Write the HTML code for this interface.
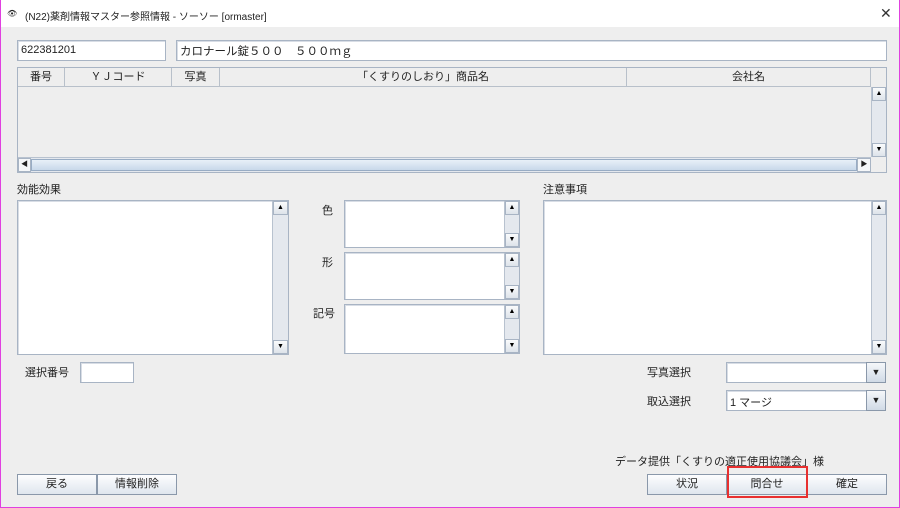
<!DOCTYPE html>
<html><head><meta charset="utf-8"><style>
*{box-sizing:border-box;margin:0;padding:0}
body{width:900px;height:508px;overflow:hidden;background:#eeeeee;font-family:"Liberation Sans","Noto Sans CJK JP",sans-serif;font-size:11px;color:#222;position:relative}
.a{position:absolute}
.win{left:0;top:0;width:900px;height:508px;border:1px solid #e040e0;border-top:none}
.title{left:1px;top:0;width:898px;height:27px;background:#fff}
.in{background:#fff;border:1px solid #a8b4c4;box-shadow:inset 1px 1px 0 #d8dde5}
.sb{background:#e4e8ee;border-left:1px solid #b8c2cf}
.arr{position:absolute;left:0;width:100%;height:14px;background:linear-gradient(#fafbfc,#dde3ea);border:1px solid #a8b4c4;font-size:7px;text-align:center;line-height:12px;color:#000}
.hd{top:68px;height:19px;background:#eee;border-right:1px solid #b8c0ca;border-bottom:1px solid #b8c0ca;text-align:center;line-height:19px}
.btn{height:21px;border:1px solid #8a98aa;background:linear-gradient(#fdfdfe,#dfe6ee);text-align:center;line-height:19px;top:474px}
.lbl{line-height:14px}
</style></head><body>
<div class="a title"></div>
<div class="a" style="left:7px;top:9px;font-size:8px">&#x1F441;</div>
<div class="a" style="left:25px;top:8px;font-size:10px">(N22)薬剤情報マスター参照情報 - ソーソー [ormaster]</div>
<div class="a" style="left:880px;top:5px;font-size:14px;font-weight:300;color:#333">✕</div>

<div class="a in" style="left:17px;top:40px;width:149px;height:21px;padding:3px 3px">622381201</div>
<div class="a in" style="left:176px;top:40px;width:711px;height:21px;padding:2px 3px;font-size:11.5px">カロナール錠５００　５００ｍｇ</div>

<div class="a" style="left:17px;top:67px;width:870px;height:106px;border:1px solid #a8b4c4;background:#eee"></div>
<div class="a hd" style="left:18px;width:47px">番号</div>
<div class="a hd" style="left:65px;width:107px">ＹＪコード</div>
<div class="a hd" style="left:172px;width:48px">写真</div>
<div class="a hd" style="left:220px;width:407px">「くすりのしおり」商品名</div>
<div class="a hd" style="left:627px;width:244px">会社名</div>
<div class="a sb" style="left:871px;top:87px;width:15px;height:70px"><div class="arr" style="top:0">▲</div><div class="arr" style="bottom:0">▼</div></div>
<div class="a" style="left:18px;top:157px;width:853px;height:15px;background:#e4e8ee;border-top:1px solid #b8c2cf">
 <div class="a" style="left:0;top:0;width:13px;height:14px;border:1px solid #a8b4c4;background:#f5f7f9;font-size:7px;line-height:12px;text-align:center">◀</div>
 <div class="a" style="left:13px;top:1px;width:826px;height:12px;background:linear-gradient(#e8f0f8,#c8d8ea);border:1px solid #98acc4"></div>
 <div class="a" style="right:0;top:0;width:14px;height:14px;border:1px solid #a8b4c4;background:#f5f7f9;font-size:7px;line-height:12px;text-align:center">▶</div>
</div>

<div class="a lbl" style="left:17px;top:183px">効能効果</div>
<div class="a in" style="left:17px;top:200px;width:272px;height:155px"></div>
<div class="a sb" style="left:272px;top:201px;width:16px;height:153px"><div class="arr" style="top:0">▲</div><div class="arr" style="bottom:0">▼</div></div>

<div class="a lbl" style="left:322px;top:204px">色</div>
<div class="a in" style="left:344px;top:200px;width:176px;height:48px"></div>
<div class="a sb" style="left:504px;top:201px;width:15px;height:46px"><div class="arr" style="top:0">▲</div><div class="arr" style="bottom:0">▼</div></div>
<div class="a lbl" style="left:322px;top:256px">形</div>
<div class="a in" style="left:344px;top:252px;width:176px;height:48px"></div>
<div class="a sb" style="left:504px;top:253px;width:15px;height:46px"><div class="arr" style="top:0">▲</div><div class="arr" style="bottom:0">▼</div></div>
<div class="a lbl" style="left:313px;top:307px">記号</div>
<div class="a in" style="left:344px;top:304px;width:176px;height:50px"></div>
<div class="a sb" style="left:504px;top:305px;width:15px;height:48px"><div class="arr" style="top:0">▲</div><div class="arr" style="bottom:0">▼</div></div>

<div class="a lbl" style="left:543px;top:183px">注意事項</div>
<div class="a in" style="left:543px;top:200px;width:344px;height:155px"></div>
<div class="a sb" style="left:871px;top:201px;width:15px;height:153px"><div class="arr" style="top:0">▲</div><div class="arr" style="bottom:0">▼</div></div>

<div class="a lbl" style="left:25px;top:366px">選択番号</div>
<div class="a in" style="left:80px;top:362px;width:54px;height:21px"></div>

<div class="a lbl" style="left:647px;top:366px">写真選択</div>
<div class="a in" style="left:726px;top:362px;width:141px;height:21px"></div>
<div class="a" style="left:866px;top:362px;width:20px;height:21px;border:1px solid #8a98aa;background:linear-gradient(#f5f7fa,#d0dae6);font-size:9px;text-align:center;line-height:19px">▼</div>
<div class="a lbl" style="left:647px;top:395px">取込選択</div>
<div class="a in" style="left:726px;top:390px;width:141px;height:21px;padding:3px 3px">1 マージ</div>
<div class="a" style="left:866px;top:390px;width:20px;height:21px;border:1px solid #8a98aa;background:linear-gradient(#f5f7fa,#d0dae6);font-size:9px;text-align:center;line-height:19px">▼</div>

<div class="a lbl" style="left:615px;top:455px">データ提供「くすりの適正使用協議会」様</div>

<div class="a btn" style="left:17px;width:80px">戻る</div>
<div class="a btn" style="left:97px;width:80px">情報削除</div>
<div class="a btn" style="left:647px;width:80px">状況</div>
<div class="a btn" style="left:727px;width:80px">問合せ</div>
<div class="a btn" style="left:807px;width:80px">確定</div>
<div class="a" style="left:727px;top:466px;width:81px;height:32px;border:2px solid #e83030"></div>
<div class="a win"></div>
</body></html>
